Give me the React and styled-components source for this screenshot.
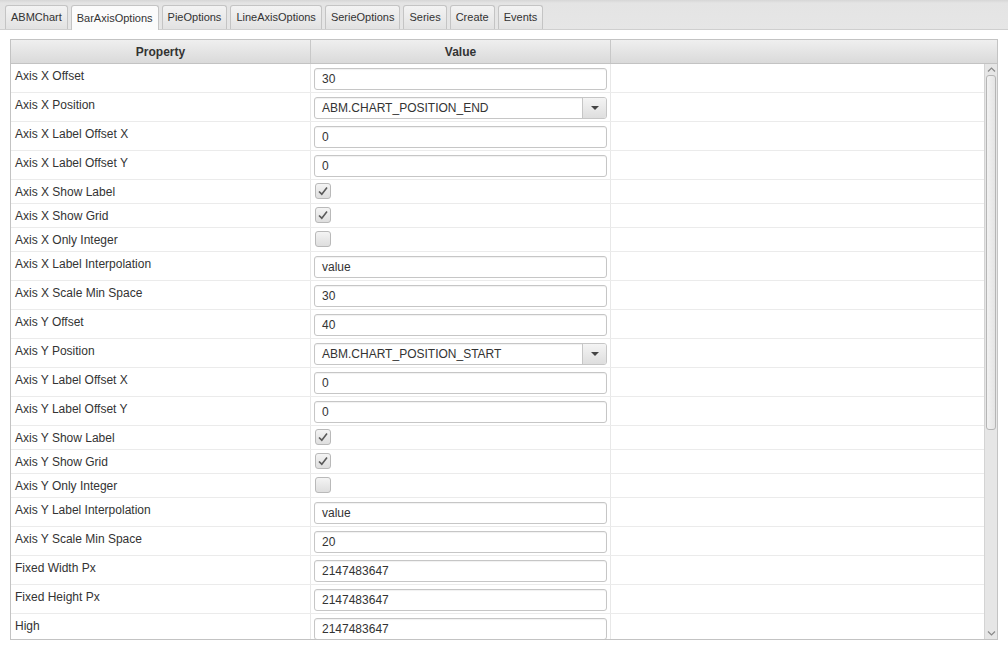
import React from 'react';
import styled, { createGlobalStyle } from 'styled-components';

const GlobalStyle = createGlobalStyle`
  html, body {
    margin: 0;
    padding: 0;
    background: #ffffff;
    font-family: "Liberation Sans", Arial, sans-serif;
    font-size: 12px;
    color: #333333;
  }
`;

const TABS = ['ABMChart', 'BarAxisOptions', 'PieOptions', 'LineAxisOptions', 'SerieOptions', 'Series', 'Create', 'Events'];

const ROWS = [
  ['Axis X Offset', 'text', '30'],
  ['Axis X Position', 'select', 'ABM.CHART_POSITION_END'],
  ['Axis X Label Offset X', 'text', '0'],
  ['Axis X Label Offset Y', 'text', '0'],
  ['Axis X Show Label', 'check', true],
  ['Axis X Show Grid', 'check', true],
  ['Axis X Only Integer', 'check', false],
  ['Axis X Label Interpolation', 'text', 'value'],
  ['Axis X Scale Min Space', 'text', '30'],
  ['Axis Y Offset', 'text', '40'],
  ['Axis Y Position', 'select', 'ABM.CHART_POSITION_START'],
  ['Axis Y Label Offset X', 'text', '0'],
  ['Axis Y Label Offset Y', 'text', '0'],
  ['Axis Y Show Label', 'check', true],
  ['Axis Y Show Grid', 'check', true],
  ['Axis Y Only Integer', 'check', false],
  ['Axis Y Label Interpolation', 'text', 'value'],
  ['Axis Y Scale Min Space', 'text', '20'],
  ['Fixed Width Px', 'text', '2147483647'],
  ['Fixed Height Px', 'text', '2147483647'],
  ['High', 'text', '2147483647'],
];

const App = () => {
  return (
    <>
      <GlobalStyle />
      <TabBar>
        {TABS.map((t) => (
          <Tab key={t} selected={t === 'BarAxisOptions'}>{t}</Tab>
        ))}
      </TabBar>

      <Content>
        <Grid>
          <HeaderRow>
            <HeaderCell>Property</HeaderCell>
            <HeaderCell>Value</HeaderCell>
            <HeaderCell />
          </HeaderRow>

          <Body>
            <Rows>
              {ROWS.map(([label, kind, value]) => (
                <Row key={label} short={kind === 'check'}>
                  <LabelCell>{label}</LabelCell>
                  <ValueCell>
                    {kind === 'text' && <TextBox>{value}</TextBox>}
                    {kind === 'select' && (
                      <SelectBox>
                        <SelectText>{value}</SelectText>
                        <SelectButton><Caret /></SelectButton>
                      </SelectBox>
                    )}
                    {kind === 'check' && (
                      <CheckBox>
                        {value && (
                          <svg width="12" height="12" viewBox="0 0 12 12">
                            <polyline points="2,6.5 4.8,9.2 10,2.6" fill="none" stroke="#5a5a5a" strokeWidth="1.6" />
                          </svg>
                        )}
                      </CheckBox>
                    )}
                  </ValueCell>
                  <EmptyCell />
                </Row>
              ))}
            </Rows>

            <ScrollBar>
              <ScrollArrow>
                <svg width="9" height="5" viewBox="0 0 9 5">
                  <polyline points="1,4.5 4.5,1 8,4.5" fill="none" stroke="#8a8a8a" strokeWidth="1.2" />
                </svg>
              </ScrollArrow>
              <Track>
                <Thumb />
              </Track>
              <ScrollArrow>
                <svg width="9" height="5" viewBox="0 0 9 5">
                  <polyline points="1,0.5 4.5,4 8,0.5" fill="none" stroke="#8a8a8a" strokeWidth="1.2" />
                </svg>
              </ScrollArrow>
            </ScrollBar>
          </Body>
        </Grid>
      </Content>
    </>
  );
};

const TabBar = styled.div`
  height: 24px;
  padding: 5px 5px 0 5px;
  display: flex;
  align-items: flex-end;
  gap: 3px;
  background: linear-gradient(#d6d6d6 0px, #e4e4e4 3px, #e6e6e6 100%);
  border-bottom: 1px solid #cfcfcf;
`;

const Tab = styled.div`
  height: ${(p) => (p.selected ? '25px' : '24px')};
  margin-bottom: ${(p) => (p.selected ? '-1px' : '0')};
  box-sizing: border-box;
  padding: 0 5px 1px 5px;
  display: flex;
  align-items: center;
  font-size: 11px;
  color: #333333;
  border: 1px solid #c4c4c4;
  border-bottom: none;
  border-radius: 3px 3px 0 0;
  background: ${(p) => (p.selected ? '#fbfbfb' : 'linear-gradient(#f3f3f3, #e2e2e2)')};
`;

const Content = styled.div`
  padding: 9px 10px 0 10px;
`;

const Grid = styled.div`
  width: 988px;
  height: 601px;
  box-sizing: border-box;
  border: 1px solid #c3c3c3;
  display: flex;
  flex-direction: column;
  overflow: hidden;
`;

const HeaderRow = styled.div`
  height: 23px;
  flex: none;
  display: grid;
  grid-template-columns: 300px 300px 1fr;
  background: linear-gradient(#efefef, #dadada);
  border-bottom: 1px solid #c3c3c3;
`;

const HeaderCell = styled.div`
  display: flex;
  align-items: center;
  justify-content: center;
  font-weight: bold;
  color: #333333;
  border-right: 1px solid #c8c8c8;

  &:last-child {
    border-right: none;
  }
`;

const Body = styled.div`
  flex: 1;
  display: flex;
  min-height: 0;
  overflow: hidden;
`;

const Rows = styled.div`
  flex: 1;
  overflow: hidden;
`;

const Row = styled.div`
  height: ${(p) => (p.short ? '24px' : '29px')};
  box-sizing: border-box;
  display: grid;
  grid-template-columns: 300px 300px 1fr;
  border-bottom: 1px solid #ebebeb;
`;

const LabelCell = styled.div`
  padding: 5px 0 0 4px;
  line-height: 14px;
  color: #333333;
  border-right: 1px solid #e8e8e8;
  white-space: nowrap;
`;

const ValueCell = styled.div`
  padding: 3px 3px 0 3px;
  border-right: 1px solid #e8e8e8;
`;

const EmptyCell = styled.div``;

const TextBox = styled.div`
  height: 22px;
  box-sizing: border-box;
  padding: 0 7px;
  display: flex;
  align-items: center;
  border: 1px solid #c6c6c6;
  border-radius: 3px;
  background: #ffffff;
  box-shadow: inset 0 1px 1px rgba(0, 0, 0, 0.06);
  color: #333333;
  margin-top: 1px;
`;

const SelectBox = styled(TextBox)`
  padding: 0;
  overflow: hidden;
`;

const SelectText = styled.div`
  flex: 1;
  padding: 0 7px;
`;

const SelectButton = styled.div`
  width: 23px;
  height: 100%;
  display: flex;
  align-items: center;
  justify-content: center;
  border-left: 1px solid #c6c6c6;
  background: linear-gradient(#f4f4f4, #dedede);
`;

const Caret = styled.div`
  width: 0;
  height: 0;
  border-left: 4px solid transparent;
  border-right: 4px solid transparent;
  border-top: 4px solid #444444;
`;

const CheckBox = styled.div`
  width: 16px;
  height: 16px;
  box-sizing: border-box;
  margin: 0 0 0 1px;
  display: flex;
  align-items: center;
  justify-content: center;
  border: 1px solid #b9b9b9;
  border-radius: 3px;
  background: linear-gradient(#f4f4f4, #dedede);
`;

const ScrollBar = styled.div`
  width: 12px;
  flex: none;
  display: flex;
  flex-direction: column;
  background: #e6e6e6;
  border-left: 1px solid #d4d4d4;
`;

const ScrollArrow = styled.div`
  height: 11px;
  flex: none;
  display: flex;
  align-items: center;
  justify-content: center;
`;

const Track = styled.div`
  flex: 1;
  padding: 0 1px;
`;

const Thumb = styled.div`
  height: 355px;
  box-sizing: border-box;
  border: 1px solid #b5b5b5;
  border-radius: 3px;
  background: linear-gradient(90deg, #f2f2f2, #e4e4e4);
`;

export default App;
